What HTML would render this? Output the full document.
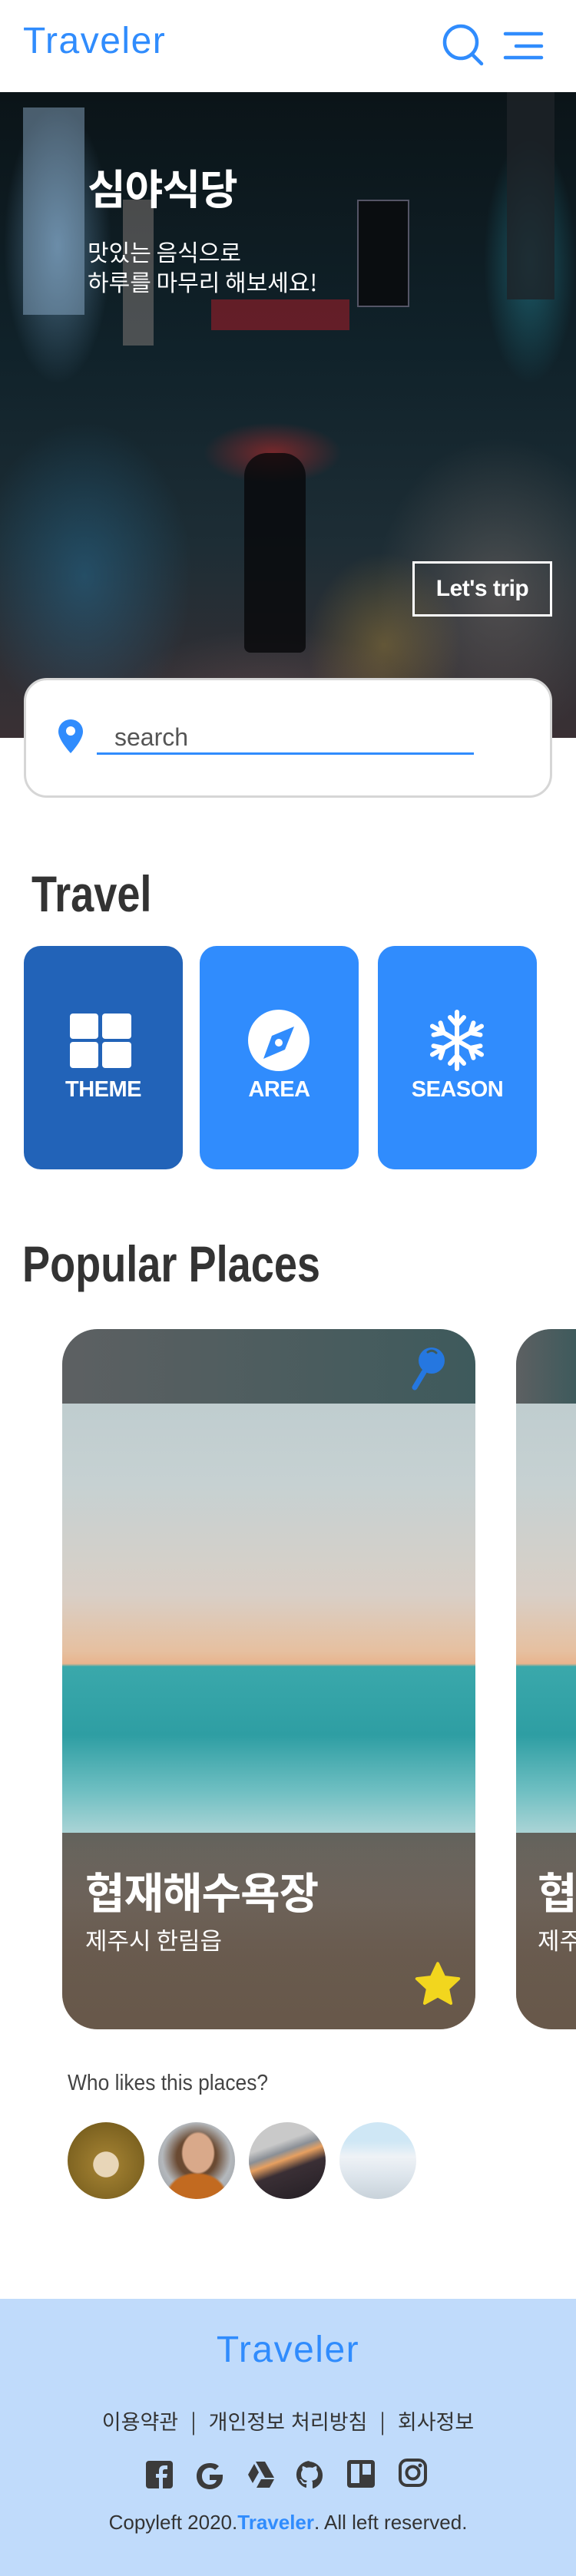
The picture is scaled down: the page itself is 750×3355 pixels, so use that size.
<!DOCTYPE html>
<html><head><meta charset="utf-8">
<style>
*{margin:0;padding:0;box-sizing:border-box}
body{width:750px;height:3355px;position:relative;background:#fff;font-family:"Liberation Sans","Noto Sans CJK KR",sans-serif;overflow:hidden}
.abs{position:absolute}
.logo{color:#308cfd;font-family:"Liberation Sans",sans-serif;font-weight:normal;letter-spacing:1.5px}
.hero{left:0;top:120px;width:750px;height:841px;overflow:hidden;
background:
radial-gradient(ellipse 90px 40px at 355px 470px,rgba(200,40,40,.55),transparent),
radial-gradient(ellipse 120px 60px at 380px 870px,rgba(190,60,70,.45),transparent),
radial-gradient(ellipse 70px 180px at 75px 200px,rgba(120,170,210,.55),transparent),
radial-gradient(ellipse 60px 160px at 690px 220px,rgba(40,150,170,.5),transparent),
radial-gradient(ellipse 100px 120px at 500px 720px,rgba(200,160,60,.35),transparent),
radial-gradient(ellipse 160px 200px at 650px 650px,rgba(160,140,130,.35),transparent),
radial-gradient(ellipse 140px 200px at 110px 630px,rgba(40,110,150,.5),transparent),
radial-gradient(ellipse 200px 100px at 350px 800px,rgba(120,90,90,.4),transparent),
linear-gradient(180deg,#0b1418 0%,#10222a 40%,#1d2d35 70%,#3a3034 100%);}
.tile{top:1232px;width:207px;height:291px;border-radius:22px;background:#308cfd;color:#fff;text-align:center}
.tile span{position:absolute;left:0;right:0;top:171px;font-size:29px;font-weight:bold;letter-spacing:-0.5px}
.h2{color:#333;font-weight:bold;transform:scaleX(.82);transform-origin:0 0;white-space:nowrap}
.card{top:1731px;width:538px;height:912px;border-radius:46px;overflow:hidden;
background:linear-gradient(180deg,#b9c9cc 0%,#c6d1d2 22%,#d9cfc6 38%,#e6c0a0 46%,#e8b48e 47.8%,#3aa8ab 48.2%,#2e9ea3 58%,#6fbfc2 66%,#c9dfe0 75%,#e6e6e2 82%,#c9b7a6 90%,#b8a592 100%)}
.band{left:0;top:0;width:100%;height:97px;background:linear-gradient(90deg,#5d6062,#3e5a5c)}
.ov{left:0;top:656px;width:100%;height:256px;background:linear-gradient(180deg,rgba(80,70,62,.8),rgba(100,84,70,.95))}
.av{top:2764px;width:100px;height:100px;border-radius:50%}
</style></head><body>

<div class="abs logo" style="left:30px;top:26px;font-size:48px;">Traveler</div>
<svg class="abs" style="left:570px;top:28px" width="70" height="62" viewBox="570 28 70 62">
<circle cx="600" cy="55" r="21" fill="none" stroke="#308cfd" stroke-width="4.5"/>
<line x1="615" y1="71" x2="627" y2="83" stroke="#308cfd" stroke-width="4.5" stroke-linecap="round"/>
</svg>
<svg class="abs" style="left:650px;top:36px" width="62" height="48" viewBox="650 36 62 48">
<g stroke="#308cfd" stroke-width="4.5" stroke-linecap="round">
<line x1="658" y1="44" x2="705" y2="44"/><line x1="672" y1="60" x2="705" y2="60"/><line x1="658" y1="75" x2="705" y2="75"/></g>
</svg>

<div class="abs hero">
 <div class="abs" style="left:30px;top:20px;width:80px;height:270px;background:rgba(150,185,215,.45)"></div>
 <div class="abs" style="left:160px;top:140px;width:40px;height:190px;background:rgba(190,170,160,.35)"></div>
 <div class="abs" style="left:465px;top:140px;width:68px;height:140px;background:#0a0d10;border:2px solid #556"></div>
 <div class="abs" style="left:660px;top:0;width:62px;height:270px;background:rgba(30,35,40,.8)"></div>
 <div class="abs" style="left:275px;top:270px;width:180px;height:40px;background:rgba(170,30,40,.55)"></div>
 <div class="abs" style="left:318px;top:470px;width:80px;height:260px;background:rgba(8,8,10,.8);border-radius:30px 30px 8px 8px"></div>
</div>
<div class="abs" style="left:114px;top:205px;color:#fff;font-size:54px;font-weight:bold;font-family:'Noto Sans CJK KR',sans-serif;line-height:76px;letter-spacing:-1px">심야식당</div>
<div class="abs" style="left:114px;top:308px;color:#fff;font-size:30px;line-height:39px;font-family:'Noto Sans CJK KR',sans-serif">맛있는 음식으로<br>하루를 마무리 해보세요!</div>
<div class="abs" style="left:537px;top:731px;width:182px;height:72px;border:3px solid #fff;color:#fff;font-size:30px;font-weight:bold;text-align:center;line-height:66px;letter-spacing:-0.5px">Let's trip</div>

<div class="abs" style="left:31px;top:883px;width:688px;height:156px;background:#fff;border:3px solid #d6d6d6;border-radius:30px"></div>
<svg class="abs" style="left:74px;top:935px" width="36" height="48" viewBox="0 0 36 48">
<path d="M18 2C9 2 2 9 2 18c0 11 16 28 16 28s16-17 16-28C34 9 27 2 18 2z" fill="#308cfd"/>
<circle cx="18" cy="17" r="6" fill="#fff"/></svg>
<div class="abs" style="left:149px;top:942px;color:#555;font-size:32px">search</div>
<div class="abs" style="left:126px;top:980px;width:491px;height:3px;background:#308cfd"></div>

<div class="abs h2" style="left:41px;top:1126px;font-size:66px;">Travel</div>

<div class="abs tile" style="left:31px;background:#2263b8">
 <svg class="abs" style="left:60px;top:88px" width="80" height="71" viewBox="0 0 80 71">
 <g fill="#fff"><rect x="0" y="0" width="37" height="33" rx="4"/><rect x="42" y="0" width="38" height="33" rx="4"/><rect x="0" y="37" width="37" height="34" rx="4"/><rect x="42" y="37" width="38" height="34" rx="4"/></g></svg>
 <span>THEME</span></div>
<div class="abs tile" style="left:260px">
 <svg class="abs" style="left:63px;top:83px" width="80" height="80" viewBox="0 0 80 80">
 <ellipse cx="40" cy="40" rx="40" ry="40" fill="#fff"/>
 <path d="M60 22 L48 52 L20 64 L31 34 Z" fill="#308cfd"/>
 <circle cx="40" cy="43" r="5" fill="#fff"/></svg>
 <span>AREA</span></div>
<div class="abs tile" style="left:492px">
 <svg class="abs" style="left:65px;top:83px" width="76" height="80" viewBox="-38 -40 76 80">
 <g stroke="#fff" stroke-width="6" stroke-linecap="round" fill="none">
 <g><line x1="0" y1="-37" x2="0" y2="37"/><polyline points="-9,-30 0,-20 9,-30"/><polyline points="-9,30 0,20 9,30"/></g>
 <g transform="rotate(60)"><line x1="0" y1="-37" x2="0" y2="37"/><polyline points="-9,-30 0,-20 9,-30"/><polyline points="-9,30 0,20 9,30"/></g>
 <g transform="rotate(-60)"><line x1="0" y1="-37" x2="0" y2="37"/><polyline points="-9,-30 0,-20 9,-30"/><polyline points="-9,30 0,20 9,30"/></g>
 </g></svg>
 <span>SEASON</span></div>

<div class="abs h2" style="left:29px;top:1608px;font-size:66px;">Popular Places</div>

<div class="abs card" style="left:81px">
 <div class="abs band"></div>
 <div class="abs ov"></div>
 <svg class="abs" style="left:449px;top:20px" width="55" height="60" viewBox="0 0 55 60">
 <circle cx="32" cy="21" r="17" fill="#2577e0"/>
 <path d="M27 10 Q33 6 38 11" stroke="#3e5a5c" stroke-width="3" fill="none" stroke-linecap="round"/>
 <line x1="22" y1="36" x2="10" y2="56" stroke="#2577e0" stroke-width="7" stroke-linecap="round"/></svg>
 <div class="abs" style="left:30px;top:692px;color:#fff;font-size:56px;font-weight:bold;font-family:'Noto Sans CJK KR',sans-serif;line-height:80px;letter-spacing:-1px">협재해수욕장</div>
 <div class="abs" style="left:30px;top:772px;color:#fff;font-size:31px;font-family:'Noto Sans CJK KR',sans-serif;line-height:46px">제주시 한림읍</div>
 <svg class="abs" style="left:457px;top:822px" width="64" height="62" viewBox="0 0 24 23">
 <path d="M12 1.5l3.1 6.6 7.1.8-5.3 4.9 1.5 7.1L12 17.3l-6.4 3.6 1.5-7.1L1.8 8.9l7.1-.8z" fill="#f2d61e" stroke="#f2d61e" stroke-width="1.5" stroke-linejoin="round"/></svg>
</div>
<div class="abs card" style="left:672px;width:78px;border-radius:46px 0 0 46px">
 <div class="abs band"></div>
 <div class="abs ov"></div>
 <div class="abs" style="left:28px;top:692px;color:#fff;font-size:56px;font-weight:bold;font-family:'Noto Sans CJK KR',sans-serif;line-height:80px;white-space:nowrap">협재</div>
 <div class="abs" style="left:28px;top:772px;color:#fff;font-size:31px;font-family:'Noto Sans CJK KR',sans-serif;line-height:46px;white-space:nowrap">제주시</div>
</div>

<div class="abs" style="left:88px;top:2697px;color:#444;font-size:29px;transform:scaleX(.91);transform-origin:0 0;white-space:nowrap">Who likes this places?</div>
<div class="abs av" style="left:88px;background:radial-gradient(circle at 50% 55%,#e8d6b8 0 22%,#9a7a2e 23%,#6b5418 100%)"></div>
<div class="abs av" style="left:206px;background:radial-gradient(ellipse 22% 28% at 52% 40%,#d9a98a 0 90%,transparent 100%),radial-gradient(ellipse 40% 30% at 50% 95%,#c26a20 0 90%,transparent 100%),radial-gradient(circle at 50% 45%,#6a4a32 0 35%,#b4b8bc 60%,#8d9298 100%)"></div>
<div class="abs av" style="left:324px;background:linear-gradient(160deg,#c9c9c9 0 30%,#8a8f96 40%,#e7a060 48%,#3a2f35 60%,#231e24 100%)"></div>
<div class="abs av" style="left:442px;background:linear-gradient(180deg,#cfe7f5 0 25%,#eef2f6 45%,#dde5ec 70%,#c8d2da 100%)"></div>

<div class="abs" style="left:0;top:2994px;width:750px;height:361px;background:#c0dbfb"></div>
<div class="abs logo" style="left:0;width:750px;top:3033px;text-align:center;font-size:48px">Traveler</div>
<div class="abs" style="left:0;width:750px;top:3133px;text-align:center;color:#333;font-size:27px;font-family:'Noto Sans CJK KR',sans-serif;line-height:40px;word-spacing:2px">이용약관 &nbsp;| &nbsp;개인정보 처리방침 &nbsp;| &nbsp;회사정보</div>
<svg class="abs" style="left:185px;top:3198px" width="380" height="48" viewBox="185 3198 380 48">
<g fill="#3b3b3b">
 <rect x="190" y="3205" width="35" height="36" rx="4"/>
 <path d="M212 3241v-14h5l1-5h-6v-3c0-2 1-3 3-3h3v-5h-4c-5 0-7 3-7 7v4h-4v5h4v14z" fill="#c0dbfb"/>
 <path d="M290 3223h-17v7h9c-1 4-4 6-9 6-6 0-10-5-10-11s4-11 10-11c3 0 5 1 7 3l5-5c-3-3-7-4-12-4-10 0-17 7-17 17s7 17 17 17c9 0 17-6 17-16z"/>
 <path d="M333 3206h12l12 21h-12z M331 3209l6 11-8 14-6-11z M340 3229h17l-6 11h-17z"/>
 <path d="M404 3205a18 18 0 0 0-6 35c1 0 1-1 1-1v-4c-5 1-6-2-6-2-1-2-2-3-2-3-2-1 0-1 0-1 2 0 3 2 3 2 2 3 4 2 5 2 0-1 1-2 1-2-4-1-8-2-8-9 0-2 1-4 2-5 0-1-1-2 0-5 0 0 2 0 5 2a16 16 0 0 1 8 0c3-2 5-2 5-2 1 3 0 4 0 5 1 1 2 3 2 5 0 7-4 8-8 9 1 1 1 2 1 3v6s0 1 1 1a18 18 0 0 0-6-35z"/>
 <rect x="452" y="3204" width="36" height="36" rx="4"/>
 <rect x="457" y="3209" width="11" height="25" fill="#c0dbfb"/><rect x="472" y="3209" width="11" height="14" fill="#c0dbfb"/>
</g>
<g fill="none" stroke="#3b3b3b" stroke-width="4">
 <rect x="521" y="3204" width="33" height="33" rx="9"/><circle cx="537.5" cy="3220.5" r="8"/></g>
<circle cx="547" cy="3211" r="2.5" fill="#3b3b3b"/>
</svg>
<div class="abs" style="left:0;width:750px;top:3270px;text-align:center;color:#333;font-size:26px">Copyleft 2020.<b style="color:#308cfd">Traveler</b>. All left reserved.</div>
</body></html>
